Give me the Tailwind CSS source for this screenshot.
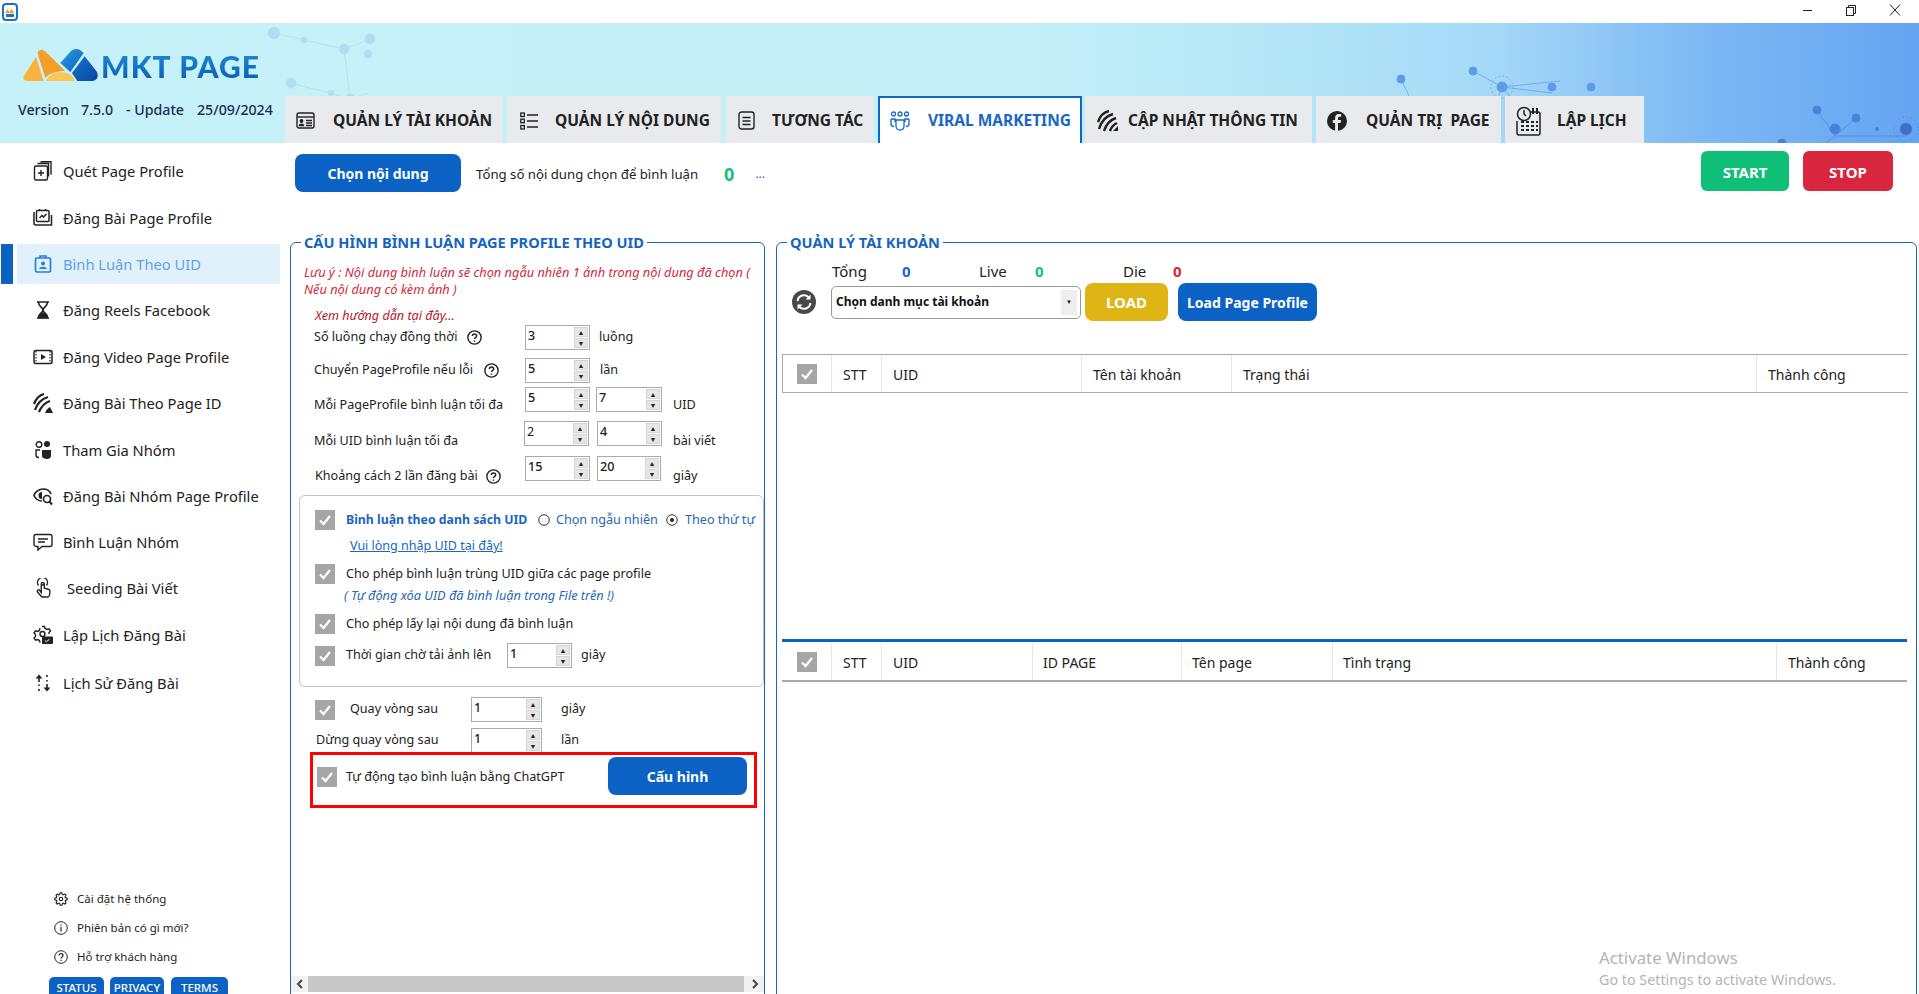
<!DOCTYPE html>
<html lang="vi">
<head>
<meta charset="utf-8">
<title>MKT PAGE</title>
<script src="https://cdn.jsdelivr.net/npm/@tailwindcss/browser@4"></script>
</head>
<body class="bg-white">
<div class="w-[1919px] h-[994px] overflow-hidden flex flex-col bg-white text-[#222] font-['Noto_Sans','Open_Sans',sans-serif] text-[12.6px]">

  <!-- title bar -->
  <div class="h-[23px] shrink-0 flex items-center justify-between">
    <svg class="ml-[2px]" width="16" height="18" viewBox="0 0 16 18"><rect x="1" y="1" width="14" height="16" rx="3" fill="#fff" stroke="#1c6fd0" stroke-width="2"/><path d="M3 10l2.500-4 2 3 2-3 3 4z" fill="#e9a52b"/><rect x="4" y="11" width="8" height="3" fill="#1c6fd0"/></svg>
    <div class="flex items-center mr-[16px] mb-[3px]">
      <svg class="mr-[32px]" width="10" height="10" viewBox="0 0 10 10"><path d="M0 5.500h9" stroke="#222"/></svg>
      <svg class="mr-[33px]" width="11" height="11" viewBox="0 0 11 11" fill="none" stroke="#222"><rect x="1.500" y="2.500" width="7" height="8"/><path d="M3.500 2.500v-2h7v8h-2"/></svg>
      <svg class="mr-[2px]" width="12" height="12" viewBox="0 0 12 12" fill="none" stroke="#222"><path d="M1 0.500l10 11M11 0.500l-10 11"/></svg>
    </div>
  </div>

  <!-- header -->
  <div class="relative h-[120px] shrink-0 flex bg-[linear-gradient(90deg,#c6f1f8_0%,#c5f0f8_52%,#b2e5f7_68%,#a4d8f7_78%,#7fbaf4_88%,#64a4f2_100%)]">
    <svg class="absolute left-0 top-0 pointer-events-none" width="1919" height="120" viewBox="0 0 1919 120">
      <g stroke="#7fb4dc" stroke-width="1" opacity=".25" fill="#6fa9d6">
        <path d="M274 10L304 17L344 26L370 16M344 26L350 76L330 70L290 60M350 76L368 70M350 76L370 110" fill="none"/>
        <circle cx="274" cy="10" r="6"/><circle cx="304" cy="17" r="3"/><circle cx="344" cy="26" r="5"/><circle cx="370" cy="16" r="5"/><circle cx="368" cy="31" r="4"/><circle cx="350" cy="76" r="5"/><circle cx="331" cy="70" r="3"/><circle cx="291" cy="60" r="5"/>
      </g>
      <g stroke="#5d9fe8" stroke-width="1" fill="#5b9bea">
        <path d="M1401 56L1420 96M1473 48L1502 64L1560 58M1502 64L1552 70M1502 64L1490 96M1502 64L1530 98" fill="none" opacity=".7"/>
        <circle cx="1401" cy="56" r="4"/><circle cx="1473" cy="48" r="4"/><circle cx="1502" cy="64" r="5"/><circle cx="1552" cy="64" r="4"/><circle cx="1591" cy="64" r="4"/>
        <circle cx="1502" cy="64" r="11" fill="none" stroke-dasharray="2 2" opacity=".6"/>
      </g>
      <g stroke="#4b83dc" stroke-width="1" fill="#4a80d8">
        <path d="M1817 87L1835 113L1906 113M1856 95L1835 113M1835 113L1800 140" fill="none" opacity=".7"/>
        <circle cx="1817" cy="87" r="4"/><circle cx="1856" cy="95" r="4"/><circle cx="1835" cy="106" r="5"/><circle cx="1906" cy="106" r="6" fill="#3e6ec8"/><circle cx="1877" cy="106" r="1.500"/><circle cx="1782" cy="120" r="4"/>
        <circle cx="1906" cy="106" r="12" fill="none" stroke-dasharray="2 2" opacity=".6"/>
      </g>
    </svg>

    <div class="relative w-[285px] shrink-0 flex flex-col">
      <div class="flex items-center h-[38px] mt-[24px] ml-[22px]">
        <svg width="79" height="38" viewBox="20 20 237 114">
          <defs>
            <linearGradient id="lgb" x1="0" y1="0" x2="1" y2="1"><stop offset="0" stop-color="#2b9be6"/><stop offset="1" stop-color="#0b5fba"/></linearGradient>
            <linearGradient id="lgd" x1="0" y1="0" x2="1" y2="1"><stop offset="0" stop-color="#1a72cc"/><stop offset="1" stop-color="#07479f"/></linearGradient>
          </defs>
          <path d="M25 108L62 50 85 122H36C27 122 22 115 25 108z" fill="#f9b33c"/>
          <path d="M67 36C72 26 82 26 89 33L150 92C130 92 108 96 90 112L70 50z" fill="#f59f2b"/>
          <path d="M92 122C100 104 116 96 136 96 156 96 172 106 180 122z" fill="#fbc653"/>
          <path d="M135 68L165 34C174 24 186 24 195 30L205 38 165 95z" fill="url(#lgb)"/>
          <path d="M170 98L208 48 243 92C252 106 246 122 230 122H186z" fill="url(#lgd)"/>
        </svg>
        <span class="text-[30px] leading-none font-black tracking-[1.1px] font-['Lato','Noto_Sans',sans-serif] bg-[linear-gradient(180deg,#1e8ad8,#0a5fb4)] bg-clip-text text-transparent">MKT PAGE</span>
      </div>
      <div class="mt-[15px] ml-[18px] flex text-[14.200px] leading-[20px] font-medium text-[#1a2f55] whitespace-nowrap">
        <span class="w-[63px]">Version</span><span class="w-[45px]">7.5.0</span><span class="w-[71px]">- Update</span><span>25/09/2024</span>
      </div>
    </div>

    <div class="relative self-end flex h-[47px] font-bold text-[15.5px] text-[#222] whitespace-nowrap">
      <div class="w-[217px] pt-[2px] bg-[#e8eaed] flex items-center pl-[11px] gap-[18px]">
        <svg width="19" height="19" viewBox="0 0 19 19" fill="none" stroke="#222" stroke-width="1.400"><rect x="1" y="2" width="17" height="15" rx="2"/><path d="M1 6h17"/><circle cx="5.500" cy="10" r="1.200" fill="#222"/><path d="M3.500 14.500c.3-1.600 3.700-1.600 4 0z" fill="#222"/><path d="M10 9.500h6M10 12h6M10 14.500h6"/></svg>
        <span>QUẢN LÝ TÀI KHOẢN</span>
      </div>
      <div class="w-[214px] pt-[2px] ml-[5px] bg-[#e8eaed] flex items-center pl-[13px] gap-[17px]">
        <svg width="18" height="18" viewBox="0 0 18 18" fill="none" stroke="#222" stroke-width="1.300"><rect x=".8" y="1" width="3.500" height="3.500"/><rect x=".8" y="7.200" width="3.500" height="3.500"/><rect x=".8" y="13.500" width="3.500" height="3.500"/><path d="M7 3h11M7 9h11M7 15h11"/></svg>
        <span>QUẢN LÝ NỘI DUNG</span>
      </div>
      <div class="w-[148px] pt-[2px] ml-[5px] bg-[#e8eaed] flex items-center pl-[12px] gap-[17px]">
        <svg width="17" height="19" viewBox="0 0 17 19" fill="none" stroke="#222" stroke-width="1.400"><rect x="1" y="1" width="15" height="17" rx="2.500"/><path d="M4.500 6.500h8M4.500 10h8M4.500 13.500h8"/></svg>
        <span>TƯƠNG TÁC</span>
      </div>
      <div class="w-[204px] ml-[4px] bg-white border-t-2 border-x-2 border-[#0d67c9] flex items-center pl-[10px] gap-[18px] text-[#1a66c8]">
        <svg width="20" height="20" viewBox="0 0 20 20" fill="none" stroke="#1a66c8" stroke-width="1.300"><circle cx="3.500" cy="3" r="2"/><circle cx="10" cy="3" r="2"/><circle cx="16.500" cy="3" r="2"/><path d="M1 8h4v3M19 8h-4v3M1 8v5c0 1.500 1.500 2.500 3 2.500M19 8v5c0 1.500-1.500 2.500-3 2.500M6 9h8v6c0 3-2 4-4 4s-4-1-4-4z"/></svg>
        <span>VIRAL MARKETING</span>
      </div>
      <div class="w-[227px] pt-[2px] ml-[3px] bg-[#e8eaed] flex items-center pl-[12px] gap-[10px]">
        <svg width="21" height="22" viewBox="0 0 21 22" fill="none" stroke="#222" stroke-width="2.400"><path d="M1 12C3 6 7 2 12 1M2 19C4 12 9 6 16 4M7 21C9 15 13 10 19 8M13 21c1-3 3-6 7-8"/><path d="M16 21l5-5v5z" fill="#222" stroke="none"/></svg>
        <span>CẬP NHẬT THÔNG TIN</span>
      </div>
      <div class="w-[185px] pt-[2px] ml-[4px] bg-[#e8eaed] flex items-center pl-[11px] gap-[19px]">
        <svg width="20" height="20" viewBox="0 0 20 20"><circle cx="10" cy="10" r="10" fill="#222"/><path d="M11 20v-8h2.600l.5-3H11V7.300c0-.9.400-1.500 1.600-1.500h1.600V3.200c-.4 0-1.300-.2-2.300-.2-2.300 0-3.800 1.400-3.800 3.900V9H5.800v3h2.300v8z" fill="#e8eaed"/></svg>
        <span class="whitespace-pre">QUẢN TRỊ  PAGE</span>
      </div>
      <div class="w-[139px] pt-[2px] ml-[4px] bg-[#e8eaed] flex items-center pl-[11px] gap-[16px]">
        <svg width="25" height="30" viewBox="0 0 25 30" fill="none" stroke="#222" stroke-width="1.500"><circle cx="8" cy="8" r="6.500" fill="#e8eaed"/><path d="M8 4v4l2 2"/><path d="M14 6h8c1 0 2 1 2 2v19c0 1-1 2-2 2H3c-1 0-2-1-2-2V15"/><path d="M17 2v6M21 2v6" stroke-width="2"/><path d="M5 16h3M10 16h3M15 16h3M20 16h2M5 20h3M10 20h3M15 20h3M20 20h2M5 24h3M10 24h3M15 24h3M20 24h2" stroke-width="2"/></svg>
        <span>LẬP LỊCH</span>
      </div>
    </div>
  </div>

  <!-- main -->
  <div class="flex-1 min-h-0 flex overflow-hidden">
    <!-- sidebar -->
    <div class="w-[285px] shrink-0 flex flex-col">
      <div class="pt-[5px] text-[14.700px] text-[#222]">
        <div class="h-[46.4px] flex items-center pl-[1px]"><div class="w-[12px] h-[40px]"></div><div class="ml-[4px] w-[263px] h-[40px] flex items-center pl-[16px] gap-[10px]">
          <svg width="20" height="20" viewBox="0 0 20 20" fill="none" stroke="#222" stroke-width="1.400"><rect x="1.500" y="5" width="13" height="14" rx="1.500"/><path d="M8 9v6M5 12h6"/><path d="M4.500 2.500h11v13M7.500.700H18v13"/></svg>
          <span>Quét Page Profile</span></div></div>
        <div class="h-[46.4px] flex items-center pl-[1px]"><div class="w-[12px] h-[40px]"></div><div class="ml-[4px] w-[263px] h-[40px] flex items-center pl-[16px] gap-[10px]">
          <svg width="20" height="20" viewBox="0 0 20 20" fill="none" stroke="#222" stroke-width="1.500"><rect x="3.500" y="2.500" width="12.500" height="11" rx="1"/><path d="M6.500 2.500V1M12.500 2.500V1M6.500 10l2.500-2.500 1.500 1.500 3-3"/><path d="M1 4v11c0 1 1 2 2 2h15.500V7"/></svg>
          <span>Đăng Bài Page Profile</span></div></div>
        <div class="h-[46.4px] flex items-center pl-[1px]"><div class="w-[12px] h-[40px] bg-[#0b62c4]"></div><div class="ml-[4px] w-[263px] h-[40px] bg-[#e0f1fb] flex items-center pl-[16px] gap-[10px] text-[#5fa3e6]">
          <svg width="20" height="20" viewBox="0 0 20 20" fill="none" stroke="#2a7fd8" stroke-width="1.700"><rect x="2.500" y="4" width="15" height="14" rx="1.500"/><path d="M7 4V2h6v2"/><circle cx="10" cy="9.500" r="2" fill="#2a7fd8" stroke="none"/><path d="M6 15c.5-3 7.500-3 8 0z" fill="#2a7fd8" stroke="none"/></svg>
          <span>Bình Luận Theo UID</span></div></div>
        <div class="h-[46.4px] flex items-center pl-[1px]"><div class="w-[12px] h-[40px]"></div><div class="ml-[4px] w-[263px] h-[40px] flex items-center pl-[16px] gap-[10px]">
          <svg width="20" height="20" viewBox="0 0 20 20" fill="none" stroke="#222" stroke-width="1.600"><path d="M4 2h12M4 18h12M5.500 2.500c0 4 4.500 5 4.500 7.500s-4.500 3.500-4.500 7.500M14.500 2.500c0 4-4.500 5-4.500 7.500s4.500 3.500 4.500 7.500"/><path d="M5.500 17.500c1-3 3.500-4 4.500-4.500 1 .5 3.500 1.500 4.500 4.500z" fill="#222"/></svg>
          <span>Đăng Reels Facebook</span></div></div>
        <div class="h-[46.4px] flex items-center pl-[1px]"><div class="w-[12px] h-[40px]"></div><div class="ml-[4px] w-[263px] h-[40px] flex items-center pl-[16px] gap-[10px]">
          <svg width="20" height="20" viewBox="0 0 20 20" fill="none" stroke="#222" stroke-width="1.500"><rect x="1" y="3.500" width="18" height="13" rx="1.500"/><path d="M3 4v12M17 4v12" stroke-dasharray="1.500 1.500" stroke-width="1.200"/><path d="M8 7l5 3-5 3z" fill="#222" stroke="none"/></svg>
          <span>Đăng Video Page Profile</span></div></div>
        <div class="h-[46.4px] flex items-center pl-[1px]"><div class="w-[12px] h-[40px]"></div><div class="ml-[4px] w-[263px] h-[40px] flex items-center pl-[16px] gap-[10px]">
          <svg width="20" height="20" viewBox="0 0 20 20" fill="none" stroke="#222" stroke-width="2.200"><path d="M1 11C3 6 7 2 11 1M2 17C4 11 8 6 15 4M6 19C8 14 11 10 17 8"/><path d="M12 20c1-3 3-5 5-6l3 6z" fill="#222" stroke="none"/></svg>
          <span>Đăng Bài Theo Page ID</span></div></div>
        <div class="h-[46.4px] flex items-center pl-[1px]"><div class="w-[12px] h-[40px]"></div><div class="ml-[4px] w-[263px] h-[40px] flex items-center pl-[16px] gap-[10px]">
          <svg width="20" height="20" viewBox="0 0 20 20"><circle cx="6" cy="4.500" r="2.800" fill="none" stroke="#222" stroke-width="1.400"/><circle cx="14" cy="4" r="3" fill="#222"/><path d="M9 10h9v6c0 2-2 3-4 3s-5-1-5-3z" fill="#222"/><path d="M7 10H3v5c0 1.500 1.500 2.500 3 2.500" fill="none" stroke="#222" stroke-width="1.400"/></svg>
          <span>Tham Gia Nhóm</span></div></div>
        <div class="h-[46.4px] flex items-center pl-[1px]"><div class="w-[12px] h-[40px]"></div><div class="ml-[4px] w-[263px] h-[40px] flex items-center pl-[16px] gap-[10px]">
          <svg width="20" height="20" viewBox="0 0 20 20" fill="none" stroke="#222" stroke-width="1.700"><path d="M9 15C5 15 2 12 1 9.500 2 6 6 3 10 3s7 2.500 8 5"/><path d="M9 6a3.500 3.500 0 1 0 0 7z" fill="#222" stroke="none"/><circle cx="14" cy="13" r="3.500"/><path d="M16.500 15.500L19 18.500" stroke-width="2"/></svg>
          <span>Đăng Bài Nhóm Page Profile</span></div></div>
        <div class="h-[45.5px] flex items-center pl-[1px]"><div class="w-[12px] h-[40px]"></div><div class="ml-[4px] w-[263px] h-[40px] flex items-center pl-[16px] gap-[10px]">
          <svg width="20" height="20" viewBox="0 0 20 20" fill="none" stroke="#222" stroke-width="1.400"><path d="M3 2.500h14c1 0 2 1 2 2v8c0 1-1 2-2 2h-8l-4 3.500v-3.500H3c-1 0-2-1-2-2v-8c0-1 1-2 2-2z"/><path d="M5 7h10M5 10h7"/></svg>
          <span>Bình Luận Nhóm</span></div></div>
        <div class="h-[46.4px] flex items-center pl-[1px]"><div class="w-[12px] h-[40px]"></div><div class="ml-[4px] w-[263px] h-[40px] flex items-center pl-[16px] gap-[14px]">
          <svg width="20" height="20" viewBox="0 0 20 20" fill="none" stroke="#222" stroke-width="1.400"><path d="M5.500 7.500a5 5 0 1 1 8 0"/><path d="M8 8.500a2 2 0 0 1 3.500-1M8.300 14.500V5.800c0-1.800 3-1.800 3 0v4.500l4 1c1.200.3 1.700 1 1.700 2.200l-.5 3.500c-.2 1.200-1 2-2 2H10c-1 0-1.500-.4-2-1l-3.500-4c-1-1.300.7-3 2-1.800z"/></svg>
          <span>Seeding Bài Viết</span></div></div>
        <div class="h-[48.5px] flex items-center pl-[1px]"><div class="w-[12px] h-[40px]"></div><div class="ml-[4px] w-[263px] h-[40px] flex items-center pl-[16px] gap-[10px]">
          <svg width="20" height="20" viewBox="0 0 20 20" fill="none" stroke="#222" stroke-width="1.400"><path d="M9 1.500h2.500l.5 2 2 1 2-.7 1.500 2.200-1.500 1.500v1.500M7 17.500l-.5-2-2-1-2 .7-1.500-2.200 1.500-1.500v-2l-1.500-1.500 1.500-2.200 2 .7 2-1 .5-2.500"/><circle cx="9.500" cy="9" r="2.500"/><rect x="9" y="11.500" width="11" height="7.500" rx="1" fill="#222" stroke="none"/><path d="M12 15.500l1.500 1.200 3-2.500" stroke="#fff" stroke-width="1"/></svg>
          <span>Lập Lịch Đăng Bài</span></div></div>
        <div class="h-[47.5px] flex items-center pl-[1px]"><div class="w-[12px] h-[40px]"></div><div class="ml-[4px] w-[263px] h-[40px] flex items-center pl-[16px] gap-[10px]">
          <svg width="20" height="20" viewBox="0 0 20 20" fill="none" stroke="#222" stroke-width="1.600"><path d="M6 18v-2M6 13v-1.500M6 9V3"/><path d="M2.500 5.500L6 1.500l3.500 4z" fill="#222" stroke="none"/><path d="M14 2v2M14 7v1.500M14 11v6"/><path d="M10.500 14.500l3.500 4 3.500-4z" fill="#222" stroke="none"/></svg>
          <span>Lịch Sử Đăng Bài</span></div></div>
      </div>

      <div class="mt-auto h-[109.500px] shrink-0 text-[11.500px] text-[#222]">
        <div class="h-[29px] flex items-center pl-[54px] gap-[9px]">
          <svg width="14" height="14" viewBox="0 0 24 24" fill="none" stroke="#222" stroke-width="2"><circle cx="12" cy="12" r="3"/><path d="M19.400 15a1.650 1.650 0 0 0 .33 1.820l.06.06a2 2 0 1 1-2.830 2.830l-.06-.06a1.650 1.650 0 0 0-2.820 1.170V21a2 2 0 0 1-4 0v-.09A1.650 1.650 0 0 0 7.260 19.700l-.06.06a2 2 0 1 1-2.830-2.830l.06-.06A1.650 1.650 0 0 0 3.250 14H3a2 2 0 0 1 0-4h.09A1.650 1.650 0 0 0 4.300 7.260l-.06-.06a2 2 0 1 1 2.830-2.830l.06.06A1.650 1.650 0 0 0 10 3.250V3a2 2 0 0 1 4 0v.09a1.650 1.650 0 0 0 2.820 1.170l.06-.06a2 2 0 1 1 2.830 2.830l-.06.06A1.650 1.650 0 0 0 20.750 10H21a2 2 0 0 1 0 4h-.09a1.650 1.650 0 0 0-1.510 1z"/></svg>
          <span>Cài đặt hệ thống</span></div>
        <div class="h-[29px] flex items-center pl-[54px] gap-[9px]">
          <svg width="14" height="14" viewBox="0 0 14 14" fill="none" stroke="#222" stroke-width="1"><circle cx="7" cy="7" r="6.300"/><path d="M7 6v4.500M7 3.500v1.200" stroke-width="1.200"/></svg>
          <span>Phiên bản có gì mới?</span></div>
        <div class="h-[29px] flex items-center pl-[54px] gap-[9px]">
          <svg width="14" height="14" viewBox="0 0 14 14" fill="none" stroke="#222" stroke-width="1"><circle cx="7" cy="7" r="6.300"/><path d="M5 5.500C5 3 9 3 9 5.500c0 1.500-2 1.500-2 3M7 9.800v1.200" stroke-width="1.200"/></svg>
          <span>Hỗ trợ khách hàng</span></div>
        <div class="flex mt-[5px] ml-[49px] text-[11.500px] leading-[12px] font-medium text-white">
          <div class="w-[55px] h-[17px] pt-[5px] bg-[#0b62c4] rounded-t-[5px] text-center">STATUS</div>
          <div class="w-[54px] h-[17px] pt-[5px] ml-[6px] bg-[#0b62c4] rounded-t-[5px] text-center">PRIVACY</div>
          <div class="w-[57px] h-[17px] pt-[5px] ml-[7px] bg-[#0b62c4] rounded-t-[5px] text-center">TERMS</div>
        </div>
      </div>
    </div>

    <!-- content -->
    <div class="flex-1 min-w-0 flex flex-col">
      <div class="h-[89px] shrink-0 flex items-start">
        <div class="w-[166px] h-[38px] mt-[11px] ml-[10px] rounded-[8px] bg-[#0b62c4] text-white font-bold text-[14px] flex items-center justify-center">Chọn nội dung</div>
        <span class="ml-[15px] mt-[21px] text-[13.200px] leading-[20px]">Tổng số nội dung chọn để bình luận</span>
        <span class="ml-[26px] mt-[19px] text-[18px] leading-[24px] font-bold text-[#12c27a]">0</span>
        <span class="ml-[21px] mt-[21px] text-[12px] leading-[20px] text-[#1a66c8]">...</span>
        <div class="ml-auto mt-[8px] pt-[2px] w-[88px] h-[40px] rounded-[6px] bg-[#0fbf77] text-white font-bold text-[15px] flex items-center justify-center">START</div>
        <div class="ml-[14px] mr-[26px] mt-[8px] pt-[2px] w-[90px] h-[40px] rounded-[6px] bg-[#d7263d] text-white font-bold text-[15px] flex items-center justify-center">STOP</div>
      </div>

      <div class="flex-1 min-h-0 flex items-start">
        <!-- left panel -->
        <fieldset class="relative ml-[5px] w-[475px] shrink-0 border border-[#1a66b8] rounded-[6px] pb-[10px]">
          <legend class="ml-[10px] px-[3px] h-[20px] leading-[20px] font-bold text-[14.600px] text-[#1565c0]">CẤU HÌNH BÌNH LUẬN PAGE PROFILE THEO UID</legend>
          <div class="h-[740px] flex flex-col">
            <div class="mt-[12px] ml-[13px] w-[450px] text-[12.800px] leading-[17px] italic text-[#cf2b3c]">Lưu ý : Nội dung bình luận sẽ chọn ngẫu nhiên 1 ảnh trong nội dung đã chọn ( Nếu nội dung có kèm ảnh )</div>
            <div class="mt-[9px] ml-[24px] text-[12.600px] leading-[17px] italic text-[#b3172b]">Xem hướng dẫn tại đây...</div>

            <div class="mt-[1px] h-[25px] flex items-center pl-[23px]">
              <div class="w-[211px] flex items-center gap-[10px]"><span>Số luồng chạy đồng thời</span>
                <svg width="15" height="15" viewBox="0 0 14 14" fill="none" stroke="#222" stroke-width="1.300"><circle cx="7" cy="7" r="6.200"/><path d="M5 5.500C5 3 9 3 9 5.500c0 1.500-2 1.500-2 3M7 9.800v1.200" stroke-width="1.400"/></svg></div>
              <div class="w-[65px] h-[25px] border border-[#aaa] flex items-start pl-[2px] pt-[1px] font-medium leading-[18px]"><span class="flex-1">3</span><div class="w-[14px] h-[21px] flex flex-col gap-[1px] mr-[1px]"><div class="h-[10px] bg-[#e6e6e6] border border-[#d4d4d4] flex items-center justify-center text-[7px] leading-none">▲</div><div class="h-[10px] bg-[#e6e6e6] border border-[#d4d4d4] flex items-center justify-center text-[7px] leading-none">▼</div></div></div>
              <span class="ml-[9px]">luồng</span>
            </div>
            <div class="mt-[8px] h-[25px] flex items-center pl-[23px]">
              <div class="w-[211px] flex items-center gap-[11px]"><span>Chuyển PageProfile nếu lỗi</span>
                <svg width="15" height="15" viewBox="0 0 14 14" fill="none" stroke="#222" stroke-width="1.300"><circle cx="7" cy="7" r="6.200"/><path d="M5 5.500C5 3 9 3 9 5.500c0 1.500-2 1.500-2 3M7 9.800v1.200" stroke-width="1.400"/></svg></div>
              <div class="w-[65px] h-[25px] border border-[#aaa] flex items-start pl-[2px] pt-[1px] font-medium leading-[18px]"><span class="flex-1">5</span><div class="w-[14px] h-[21px] flex flex-col gap-[1px] mr-[1px]"><div class="h-[10px] bg-[#e6e6e6] border border-[#d4d4d4] flex items-center justify-center text-[7px] leading-none">▲</div><div class="h-[10px] bg-[#e6e6e6] border border-[#d4d4d4] flex items-center justify-center text-[7px] leading-none">▼</div></div></div>
              <span class="ml-[10px]">lần</span>
            </div>
            <div class="mt-[4px] h-[25px] flex items-center pl-[23px]">
              <div class="w-[211px] pt-[12px]"><span>Mỗi PageProfile bình luận tối đa</span></div>
              <div class="w-[65px] h-[25px] border border-[#aaa] flex items-start pl-[2px] pt-[1px] font-medium leading-[18px]"><span class="flex-1">5</span><div class="w-[14px] h-[21px] flex flex-col gap-[1px] mr-[1px]"><div class="h-[10px] bg-[#e6e6e6] border border-[#d4d4d4] flex items-center justify-center text-[7px] leading-none">▲</div><div class="h-[10px] bg-[#e6e6e6] border border-[#d4d4d4] flex items-center justify-center text-[7px] leading-none">▼</div></div></div>
              <div class="ml-[6px] w-[66px] h-[25px] border border-[#aaa] flex items-start pl-[2px] pt-[1px] font-medium leading-[18px]"><span class="flex-1">7</span><div class="w-[14px] h-[21px] flex flex-col gap-[1px] mr-[1px]"><div class="h-[10px] bg-[#e6e6e6] border border-[#d4d4d4] flex items-center justify-center text-[7px] leading-none">▲</div><div class="h-[10px] bg-[#e6e6e6] border border-[#d4d4d4] flex items-center justify-center text-[7px] leading-none">▼</div></div></div>
              <span class="ml-[11px] pt-[12px]">UID</span>
            </div>
            <div class="mt-[9px] h-[25px] flex items-center pl-[23px]">
              <div class="w-[210px] pt-[15px]"><span>Mỗi UID bình luận tối đa</span></div>
              <div class="w-[65px] h-[25px] border border-[#aaa] flex items-start pl-[2px] pt-[1px] leading-[18px]"><span class="flex-1">2</span><div class="w-[14px] h-[21px] flex flex-col gap-[1px] mr-[1px]"><div class="h-[10px] bg-[#e6e6e6] border border-[#d4d4d4] flex items-center justify-center text-[7px] leading-none">▲</div><div class="h-[10px] bg-[#e6e6e6] border border-[#d4d4d4] flex items-center justify-center text-[7px] leading-none">▼</div></div></div>
              <div class="ml-[8px] w-[65px] h-[25px] border border-[#aaa] flex items-start pl-[2px] pt-[1px] font-medium leading-[18px]"><span class="flex-1">4</span><div class="w-[14px] h-[21px] flex flex-col gap-[1px] mr-[1px]"><div class="h-[10px] bg-[#e6e6e6] border border-[#d4d4d4] flex items-center justify-center text-[7px] leading-none">▲</div><div class="h-[10px] bg-[#e6e6e6] border border-[#d4d4d4] flex items-center justify-center text-[7px] leading-none">▼</div></div></div>
              <span class="ml-[11px] pt-[15px]">bài viết</span>
            </div>
            <div class="mt-[10px] h-[25px] flex items-center pl-[24px]">
              <div class="w-[210px] pt-[15px] flex items-center gap-[8px]"><span>Khoảng cách 2 lần đăng bài</span>
                <svg width="15" height="15" viewBox="0 0 14 14" fill="none" stroke="#222" stroke-width="1.300"><circle cx="7" cy="7" r="6.200"/><path d="M5 5.500C5 3 9 3 9 5.500c0 1.500-2 1.500-2 3M7 9.800v1.200" stroke-width="1.400"/></svg></div>
              <div class="w-[65px] h-[25px] border border-[#aaa] flex items-start pl-[2px] pt-[1px] font-medium leading-[18px]"><span class="flex-1">15</span><div class="w-[14px] h-[21px] flex flex-col gap-[1px] mr-[1px]"><div class="h-[10px] bg-[#e6e6e6] border border-[#d4d4d4] flex items-center justify-center text-[7px] leading-none">▲</div><div class="h-[10px] bg-[#e6e6e6] border border-[#d4d4d4] flex items-center justify-center text-[7px] leading-none">▼</div></div></div>
              <div class="ml-[7px] w-[64px] h-[25px] border border-[#aaa] flex items-start pl-[2px] pt-[1px] font-medium leading-[18px]"><span class="flex-1">20</span><div class="w-[14px] h-[21px] flex flex-col gap-[1px] mr-[1px]"><div class="h-[10px] bg-[#e6e6e6] border border-[#d4d4d4] flex items-center justify-center text-[7px] leading-none">▲</div><div class="h-[10px] bg-[#e6e6e6] border border-[#d4d4d4] flex items-center justify-center text-[7px] leading-none">▼</div></div></div>
              <span class="ml-[12px] pt-[15px]">giây</span>
            </div>

            <!-- inner box -->
            <div class="mt-[14px] ml-[8px] w-[465px] h-[192px] shrink-0 border border-[#c4c4c4] rounded-[6px]">
              <div class="mt-[14px] h-[20px] flex items-center pl-[15px] whitespace-nowrap">
                <div class="w-[20px] h-[20px] shrink-0 bg-[#a6a6a6] flex items-center justify-center"><svg width="14" height="12" viewBox="0 0 14 12" fill="none" stroke="#fff" stroke-width="2.200"><path d="M2 6.500l3.500 3.500L12 2"/></svg></div>
                <span class="ml-[11px] w-[180px] shrink-0 font-bold text-[12.300px] text-[#1a66c0]">Bình luận theo danh sách UID</span>
                <svg class="ml-[12px] shrink-0" width="12" height="12" viewBox="0 0 12 12" fill="none" stroke="#333"><circle cx="6" cy="6" r="5.300"/></svg>
                <span class="ml-[6px] w-[110px] shrink-0 text-[#2468b4]">Chọn ngẫu nhiên</span>
                <svg class="shrink-0" width="12" height="12" viewBox="0 0 12 12" fill="none" stroke="#333"><circle cx="6" cy="6" r="5.300"/><circle cx="6" cy="6" r="2" fill="#222" stroke="none"/></svg>
                <span class="ml-[7px] text-[#2468b4]">Theo thứ tự</span>
              </div>
              <div class="mt-[8px] h-[16px] pl-[50px] leading-[16px] text-[12.500px] text-[#1a66c0] underline">Vui lòng nhập UID tại đây!</div>
              <div class="mt-[10px] h-[20px] flex items-center pl-[15px]">
                <div class="w-[20px] h-[20px] bg-[#a6a6a6] flex items-center justify-center"><svg width="14" height="12" viewBox="0 0 14 12" fill="none" stroke="#fff" stroke-width="2.200"><path d="M2 6.500l3.500 3.500L12 2"/></svg></div>
                <span class="ml-[11px]">Cho phép bình luận trùng UID giữa các page profile</span>
              </div>
              <div class="mt-[3px] h-[16px] pl-[44px] leading-[16px] text-[12.750px] italic text-[#2468b4]">( Tự động xóa UID đã bình luận trong File trên !)</div>
              <div class="mt-[11px] h-[20px] flex items-center pl-[15px]">
                <div class="w-[20px] h-[20px] bg-[#a6a6a6] flex items-center justify-center"><svg width="14" height="12" viewBox="0 0 14 12" fill="none" stroke="#fff" stroke-width="2.200"><path d="M2 6.500l3.500 3.500L12 2"/></svg></div>
                <span class="ml-[11px]">Cho phép lấy lại nội dung đã bình luận</span>
              </div>
              <div class="mt-[9px] h-[25px] flex items-center pl-[15px]">
                <div class="w-[20px] h-[20px] bg-[#a6a6a6] flex items-center justify-center"><svg width="14" height="12" viewBox="0 0 14 12" fill="none" stroke="#fff" stroke-width="2.200"><path d="M2 6.500l3.500 3.500L12 2"/></svg></div>
                <span class="ml-[11px] w-[161px]">Thời gian chờ tải ảnh lên</span>
                <div class="w-[65px] h-[25px] border border-[#aaa] flex items-start pl-[2px] pt-[1px] font-medium leading-[18px]"><span class="flex-1">1</span><div class="w-[14px] h-[21px] flex flex-col gap-[1px] mr-[1px]"><div class="h-[10px] bg-[#e6e6e6] border border-[#d4d4d4] flex items-center justify-center text-[7px] leading-none">▲</div><div class="h-[10px] bg-[#e6e6e6] border border-[#d4d4d4] flex items-center justify-center text-[7px] leading-none">▼</div></div></div>
                <span class="ml-[9px]">giây</span>
              </div>
            </div>

            <div class="mt-[10px] h-[25px] flex items-center pl-[24px]">
              <div class="w-[20px] h-[20px] bg-[#a6a6a6] flex items-center justify-center"><svg width="14" height="12" viewBox="0 0 14 12" fill="none" stroke="#fff" stroke-width="2.200"><path d="M2 6.500l3.500 3.500L12 2"/></svg></div>
              <span class="ml-[15px] w-[121px]">Quay vòng sau</span>
              <div class="w-[71px] h-[25px] border border-[#aaa] flex items-start pl-[2px] pt-[1px] font-medium leading-[18px]"><span class="flex-1">1</span><div class="w-[14px] h-[21px] flex flex-col gap-[1px] mr-[1px]"><div class="h-[10px] bg-[#e6e6e6] border border-[#d4d4d4] flex items-center justify-center text-[7px] leading-none">▲</div><div class="h-[10px] bg-[#e6e6e6] border border-[#d4d4d4] flex items-center justify-center text-[7px] leading-none">▼</div></div></div>
              <span class="ml-[19px]">giây</span>
            </div>
            <div class="mt-[6px] h-[25px] flex items-center pl-[25px]">
              <span class="w-[155px]">Dừng quay vòng sau</span>
              <div class="w-[71px] h-[25px] border border-[#aaa] flex items-start pl-[2px] pt-[1px] font-medium leading-[18px]"><span class="flex-1">1</span><div class="w-[14px] h-[21px] flex flex-col gap-[1px] mr-[1px]"><div class="h-[10px] bg-[#e6e6e6] border border-[#d4d4d4] flex items-center justify-center text-[7px] leading-none">▲</div><div class="h-[10px] bg-[#e6e6e6] border border-[#d4d4d4] flex items-center justify-center text-[7px] leading-none">▼</div></div></div>
              <span class="ml-[19px]">lần</span>
            </div>

            <div class="relative -mt-[1px] ml-[19px] w-[447px] h-[56px] shrink-0 border-[3px] border-[#fe0000] flex items-start pl-[4px]">
              <div class="mt-[12px] w-[20px] h-[20px] bg-[#a6a6a6] flex items-center justify-center"><svg width="14" height="12" viewBox="0 0 14 12" fill="none" stroke="#fff" stroke-width="2.200"><path d="M2 6.500l3.500 3.500L12 2"/></svg></div>
              <span class="ml-[9px] mt-[12px] leading-[20px]">Tự động tạo bình luận bằng ChatGPT</span>
              <div class="ml-auto mr-[7px] mt-[2px] w-[139px] h-[38px] rounded-[8px] bg-[#0b62c4] text-white font-bold text-[14px] flex items-center justify-center">Cấu hình</div>
            </div>

            <!-- scrollbar -->
            <div class="mt-auto h-[16px] shrink-0 bg-[#f1f1f1] flex items-center">
              <svg class="ml-[5px]" width="7" height="10" viewBox="0 0 7 10" fill="none" stroke="#444" stroke-width="2"><path d="M6 1L2 5l4 4"/></svg>
              <div class="ml-[5px] w-[436px] h-[16px] bg-[#c8c8c8]"></div>
              <svg class="ml-[8px]" width="7" height="10" viewBox="0 0 7 10" fill="none" stroke="#444" stroke-width="2"><path d="M1 1l4 4-4 4"/></svg>
            </div>
          </div>
        </fieldset>

        <!-- right panel -->
        <fieldset class="ml-[11px] w-[1141px] shrink-0 border border-[#1a66b8] rounded-[6px] pb-[10px]">
          <legend class="ml-[10px] px-[3px] h-[20px] leading-[20px] font-bold text-[14.600px] text-[#1565c0]">QUẢN LÝ TÀI KHOẢN</legend>
          <div class="h-[740px]">
            <div class="mt-[9px] h-[20px] flex items-center text-[15px] leading-[20px] pl-[55px]">
              <span class="w-[70px]">Tổng</span><span class="w-[77px] font-bold text-[#1a66c8]">0</span>
              <span class="w-[56px]">Live</span><span class="w-[88px] font-bold text-[#12c27a]">0</span>
              <span class="w-[50px]">Die</span><span class="font-bold text-[#d7263d]">0</span>
            </div>
            <div class="mt-[2px] h-[38px] flex items-center pl-[15px]">
              <svg width="24" height="24" viewBox="0 0 24 24"><circle cx="12" cy="12" r="12" fill="#484848"/><path d="M5.500 11a6.600 6.600 0 0 1 11.500-3.500M18.500 13a6.600 6.600 0 0 1-11.500 3.500" fill="none" stroke="#fff" stroke-width="2"/><path d="M18.500 4.500v5h-5zM5.500 19.500v-5h5z" fill="#fff"/></svg>
              <div class="ml-[15px] w-[250px] h-[33px] border border-[#999] rounded-[5px] flex items-center pl-[4px] pr-[3px] font-bold text-[12px] text-[#111]">
                <span class="flex-1">Chọn danh mục tài khoản</span>
                <div class="w-[16px] h-[25px] bg-[#eee] flex items-center justify-center text-[6px]">▼</div>
              </div>
              <div class="ml-[4px] w-[83px] h-[38px] rounded-[8px] bg-[#dfb516] text-white font-bold text-[15px] flex items-center justify-center">LOAD</div>
              <div class="ml-[10px] w-[139px] h-[38px] rounded-[8px] bg-[#0b62c4] text-white font-bold text-[14px] flex items-center justify-center">Load Page Profile</div>
            </div>

            <div class="mt-[33px] ml-[5px] w-[1126px] h-[39px] border border-r-0 border-[#aaa] flex text-[14px]">
              <div class="w-[49px] border-r border-[#e4e4e4] flex items-center justify-center"><div class="w-[20px] h-[20px] bg-[#a6a6a6] flex items-center justify-center"><svg width="14" height="12" viewBox="0 0 14 12" fill="none" stroke="#fff" stroke-width="2.200"><path d="M2 6.500l3.500 3.500L12 2"/></svg></div></div>
              <div class="w-[50px] border-r border-[#e4e4e4] flex items-center pl-[11px] pt-[1px]">STT</div>
              <div class="w-[200px] border-r border-[#e4e4e4] flex items-center pl-[11px] pt-[1px]">UID</div>
              <div class="w-[150px] border-r border-[#e4e4e4] flex items-center pl-[11px] pt-[1px]">Tên tài khoản</div>
              <div class="w-[525px] border-r border-[#e4e4e4] flex items-center pl-[11px] pt-[1px]">Trạng thái</div>
              <div class="flex-1 flex items-center pl-[11px] pt-[1px]">Thành công</div>
            </div>

            <div class="mt-[246px] ml-[5px] w-[1125px] h-[3px] bg-[#0b62c4]"></div>
            <div class="mt-[1px] ml-[5px] w-[1125px] h-[39px] border-b-2 border-[#aaa] flex text-[14px]">
              <div class="w-[50px] border-r border-[#e4e4e4] flex items-center justify-center"><div class="w-[20px] h-[20px] bg-[#a6a6a6] flex items-center justify-center"><svg width="14" height="12" viewBox="0 0 14 12" fill="none" stroke="#fff" stroke-width="2.200"><path d="M2 6.500l3.500 3.500L12 2"/></svg></div></div>
              <div class="w-[50px] border-r border-[#e4e4e4] flex items-center pl-[11px] pt-[1px]">STT</div>
              <div class="w-[151px] border-r border-[#e4e4e4] flex items-center pl-[11px] pt-[1px]">UID</div>
              <div class="w-[149px] border-r border-[#e4e4e4] flex items-center pl-[10px] pt-[1px]">ID PAGE</div>
              <div class="w-[151px] border-r border-[#e4e4e4] flex items-center pl-[10px] pt-[1px]">Tên page</div>
              <div class="w-[444px] border-r border-[#e4e4e4] flex items-center pl-[10px] pt-[1px]">Tình trạng</div>
              <div class="flex-1 flex items-center pl-[11px] pt-[1px]">Thành công</div>
            </div>
          </div>
        </fieldset>
      </div>
    </div>
  </div>
</div>

<!-- Windows activation watermark -->
<div class="absolute left-[1599px] top-[946px] text-[#b4b4b4] font-['Noto_Sans',sans-serif] pointer-events-none">
  <div class="text-[16.800px] leading-[24px]">Activate Windows</div>
  <div class="text-[14.300px] leading-[20px]">Go to Settings to activate Windows.</div>
</div>
</body>
</html>
